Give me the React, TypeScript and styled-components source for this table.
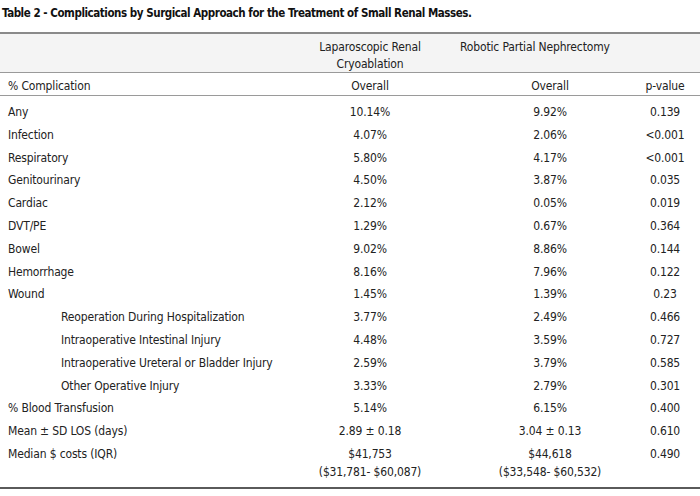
import React from 'react';
import styled, { createGlobalStyle } from 'styled-components';

const GlobalStyle = createGlobalStyle`
  html, body {
    margin: 0;
    padding: 0;
    background: #fff;
  }
  body {
    font-family: 'Liberation Sans Narrow', 'DejaVu Sans Condensed', 'Liberation Sans', sans-serif;
    color: #222;
  }
`;

type Row = {
  label: string;
  a: string;
  b: string;
  p: string;
  indent?: boolean;
  a2?: string;
  b2?: string;
};

const rows: Row[] = [
  { label: 'Any', a: '10.14%', b: '9.92%', p: '0.139' },
  { label: 'Infection', a: '4.07%', b: '2.06%', p: '<0.001' },
  { label: 'Respiratory', a: '5.80%', b: '4.17%', p: '<0.001' },
  { label: 'Genitourinary', a: '4.50%', b: '3.87%', p: '0.035' },
  { label: 'Cardiac', a: '2.12%', b: '0.05%', p: '0.019' },
  { label: 'DVT/PE', a: '1.29%', b: '0.67%', p: '0.364' },
  { label: 'Bowel', a: '9.02%', b: '8.86%', p: '0.144' },
  { label: 'Hemorrhage', a: '8.16%', b: '7.96%', p: '0.122' },
  { label: 'Wound', a: '1.45%', b: '1.39%', p: '0.23' },
  { label: 'Reoperation During Hospitalization', a: '3.77%', b: '2.49%', p: '0.466', indent: true },
  { label: 'Intraoperative Intestinal Injury', a: '4.48%', b: '3.59%', p: '0.727', indent: true },
  { label: 'Intraoperative Ureteral or Bladder Injury', a: '2.59%', b: '3.79%', p: '0.585', indent: true },
  { label: 'Other Operative Injury', a: '3.33%', b: '2.79%', p: '0.301', indent: true },
  { label: '% Blood Transfusion', a: '5.14%', b: '6.15%', p: '0.400' },
  { label: 'Mean ± SD LOS (days)', a: '2.89 ± 0.18', b: '3.04 ± 0.13', p: '0.610' },
  {
    label: 'Median $ costs (IQR)',
    a: '$41,753',
    b: '$44,618',
    p: '0.490',
    a2: '($31,781- $60,087)',
    b2: '($33,548- $60,532)',
  },
];

const Page = styled.div`
  width: 700px;
  height: 496px;
  overflow: hidden;
  font-size: 12px;
  letter-spacing: -0.15px;
`;

const Title = styled.div`
  font-weight: bold;
  font-size: 11.5px;
  letter-spacing: -0.45px;
  color: #111;
  padding: 6px 0 0 2px;
  height: 26px;
  box-sizing: border-box;
`;

const Table = styled.div`
  border-top: 2px solid #8a8a8a;
  border-bottom: 2px solid #5a5a5a;
  margin-top: 6px;
`;

const Grid = styled.div`
  display: grid;
  grid-template-columns: 280px 180px 180px 50px;
`;

const GroupHead = styled(Grid)`
  background: #f4f4f4;
  height: 39px;
  border-bottom: 1px solid #9a9a9a;
  align-items: start;
  padding-top: 5px;
  box-sizing: border-box;
  line-height: 17px;
`;

const ColHead = styled(Grid)`
  height: 23px;
  border-bottom: 1px solid #9a9a9a;
  align-items: center;
  padding-top: 4px;
  box-sizing: border-box;
`;

const Body = styled.div`
  padding: 4px 0 6px;
`;

const BodyRow = styled(Grid)`
  min-height: 22.8px;
  align-items: start;
  line-height: 18px;
  padding-top: 3px;
  box-sizing: border-box;
`;

const Label = styled.div<{ $indent?: boolean }>`
  padding-left: ${(p) => (p.$indent ? '61px' : '8px')};
  white-space: nowrap;
`;

const Cell = styled.div<{ $align?: 'left' | 'center' }>`
  text-align: ${(p) => p.$align ?? 'center'};
  white-space: nowrap;
`;

export default function App() {
  return (
    <>
      <GlobalStyle />
      <Page>
        <Title>Table 2 - Complications by Surgical Approach for the Treatment of Small Renal Masses.</Title>
        <Table>
          <GroupHead>
            <div />
            <Cell>
              Laparoscopic Renal
              <br />
              Cryoablation
            </Cell>
            <Cell $align="left">Robotic Partial Nephrectomy</Cell>
            <div />
          </GroupHead>
          <ColHead>
            <Label>% Complication</Label>
            <Cell>Overall</Cell>
            <Cell>Overall</Cell>
            <Cell>p-value</Cell>
          </ColHead>
          <Body>
            {rows.map((r) => (
              <BodyRow key={r.label}>
                <Label $indent={r.indent}>{r.label}</Label>
                <Cell>
                  {r.a}
                  {r.a2 && (
                    <>
                      <br />
                      {r.a2}
                    </>
                  )}
                </Cell>
                <Cell>
                  {r.b}
                  {r.b2 && (
                    <>
                      <br />
                      {r.b2}
                    </>
                  )}
                </Cell>
                <Cell>{r.p}</Cell>
              </BodyRow>
            ))}
          </Body>
        </Table>
      </Page>
    </>
  );
}
